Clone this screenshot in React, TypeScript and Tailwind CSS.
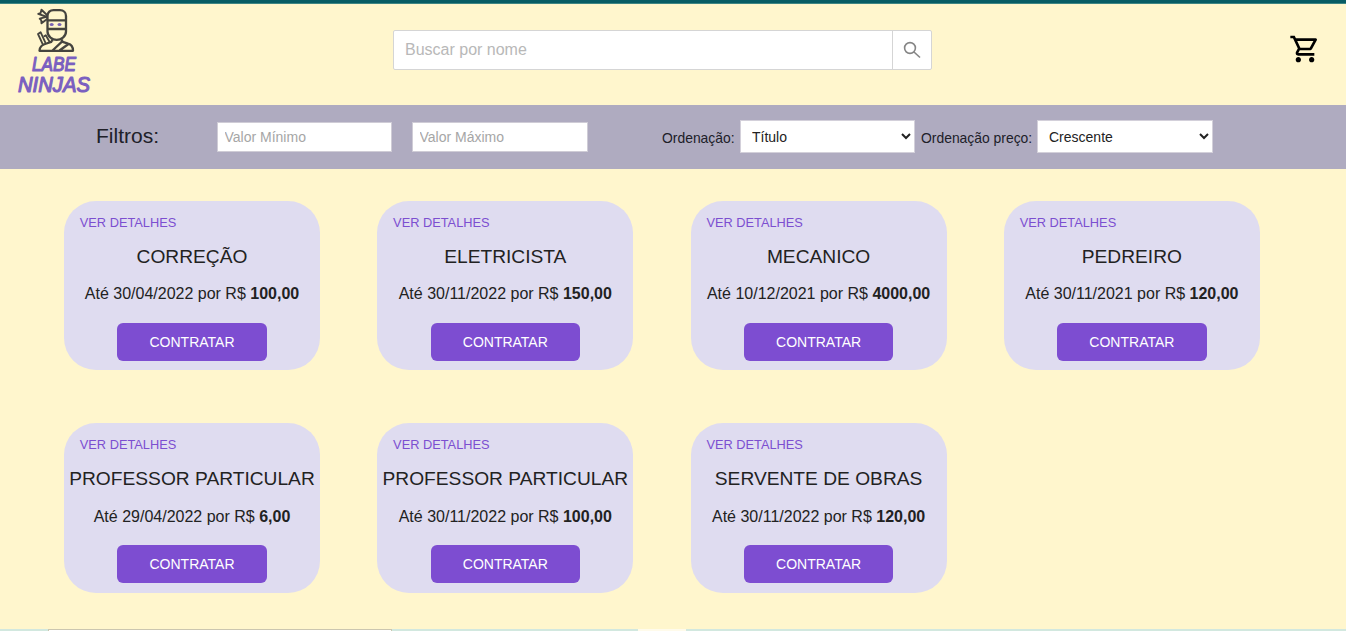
import React from "react";

type Job = { title: string; date: string; price: string };

const jobs: Job[] = [
  { title: "CORREÇÃO", date: "30/04/2022", price: "100,00" },
  { title: "ELETRICISTA", date: "30/11/2022", price: "150,00" },
  { title: "MECANICO", date: "10/12/2021", price: "4000,00" },
  { title: "PEDREIRO", date: "30/11/2021", price: "120,00" },
  { title: "PROFESSOR PARTICULAR", date: "29/04/2022", price: "6,00" },
  { title: "PROFESSOR PARTICULAR", date: "30/11/2022", price: "100,00" },
  { title: "SERVENTE DE OBRAS", date: "30/11/2022", price: "120,00" },
];

function Logo() {
  return (
    <svg width="80" height="92" viewBox="14 6 80 92" role="img" aria-label="Labe Ninjas">
      <g fill="none" stroke="#45443f" strokeWidth="2.300" strokeLinejoin="round">
        <path d="M47.500 20v-4c0-3.800 2.700-5.800 6-5.800h6.500c3.500 0 6 2.200 6 5.800v15.500c0 5-5 8.300-9.300 8.300s-9.200-3.300-9.200-8.300z" />
        <path d="M47 20.300h19M47 29h19" />
        <path d="M47.500 15.500l-6-5.800-1 3.500-2.300.6 9 3.200" strokeWidth="1.900" />
        <path d="M47.500 16.500l-7.800 2.200 1.600 1.700.2 2.800 6-4.500" strokeWidth="1.900" />
        <path d="M52 39.200v2.500M62 39.200v2.500" />
        <path d="M52 41.700l-5.500 1.800c-4.500 1.200-7 3-7 7.300h33.500c0-4.300-1.500-6.500-5-7.200l-6-1.900L52.500 50.500M59.500 50.500l9-6.500" />
        <path d="M43 44.800l-5-10.800 2.600-1.800 5 11M43.800 36.500l2-1.200 4 7" strokeWidth="1.800" />
      </g>
      <ellipse cx="51.700" cy="24.600" rx="2" ry="1.500" fill="#7962b5" />
      <ellipse cx="59.500" cy="24.600" rx="2" ry="1.500" fill="#7962b5" />
      <g
        fill="#7a5fc0"
        stroke="#7a5fc0"
        strokeWidth="1.200"
        strokeLinejoin="round"
        fontFamily="'Liberation Sans Narrow', 'Liberation Sans', Arial, sans-serif"
        fontStyle="italic"
      >
        <text x="32" y="71" fontSize="20" textLength="44" lengthAdjust="spacingAndGlyphs">LABE</text>
        <text x="18" y="92" fontSize="21.500" textLength="72" lengthAdjust="spacingAndGlyphs">NINJAS</text>
      </g>
    </svg>
  );
}

function Header() {
  return (
    <header className="flex h-[101px] justify-between pl-[14px] pr-[25px] pt-0.5">
      <div className="w-[101px]">
        <Logo />
      </div>
      <div className="mt-6 flex h-10 w-[539px] rounded-[2px] border border-[#d5d5d5] bg-white">
        <input
          className="min-w-0 flex-1 px-[11.500px] text-base outline-none placeholder:text-[#b8b8b8]"
          placeholder="Buscar por nome"
        />
        <button aria-label="Buscar" className="flex w-[39px] items-center justify-center border-l border-[#d5d5d5]">
          <svg width="18" height="18" viewBox="0 0 18 18" fill="none" stroke="#858585" strokeWidth="1.600">
            <circle cx="7" cy="7" r="5.400" />
            <path d="M11 11l6 5.500" />
          </svg>
        </button>
      </div>
      <div className="flex w-[112px] justify-end pt-[27px]">
        <svg width="32" height="32" viewBox="0 0 24 24" fill="#000" aria-label="Carrinho">
          <path d="M15.550 13c.75 0 1.410-.41 1.750-1.030l3.580-6.490c.37-.66-.11-1.480-.87-1.480H5.210l-.94-2H1v2h2l3.600 7.590-1.350 2.440C4.520 15.370 5.480 17 7 17h12v-2H7l1.100-2h7.450zM6.160 6h12.150l-2.760 5H8.530L6.160 6zM7 18c-1.100 0-1.990.9-1.990 2S5.900 22 7 22s2-.9 2-2-.9-2-2-2zm10 0c-1.100 0-1.990.9-1.990 2s.89 2 1.990 2 2-.9 2-2-.9-2-2-2z" />
        </svg>
      </div>
    </header>
  );
}

function Filters() {
  const field = "h-[30px] border border-[#cfccd6] bg-white px-[6.500px] text-sm outline-none placeholder:text-[#a6a6a6]";
  const select = "mb-px h-[33px] border border-[#d3d0da] bg-white pl-[7px] text-sm text-[#222]";
  return (
    <section className="flex h-16 items-center bg-[#afabc0] text-sm text-[#202028]">
      <h2 className="mb-0.5 ml-24 w-[121px] text-[21px]">Filtros:</h2>
      <input className={`${field} w-[175px]`} placeholder="Valor Mínimo" />
      <input className={`${field} ml-5 w-[176px]`} placeholder="Valor Máximo" />
      <label className="ml-[74px] w-[78px] text-[13.900px] leading-5 pt-px">Ordenação:</label>
      <select className={`${select} w-[175px]`}>
        <option>Título</option>
      </select>
      <label className="ml-1.5 w-[116px] text-[13.900px] leading-5 pt-px">Ordenação preço:</label>
      <select className={`${select} w-[176px]`}>
        <option>Crescente</option>
      </select>
    </section>
  );
}

function Card({ title, date, price }: Job) {
  return (
    <article className="flex h-[169.400px] w-64 flex-col items-center rounded-[32px] bg-[#dfdcf0] pt-3">
      <a className="ml-[15.800px] self-start text-[12.800px] leading-5 text-[#7c4fd0]">VER DETALHES</a>
      <h3 className="mt-[9.500px] whitespace-nowrap text-[19.200px] leading-7 text-[#222]">{title}</h3>
      <p className="mt-[11.700px] text-base leading-6 text-[#222]">
        Até {date} por R$ <b>{price}</b>
      </p>
      <button className="mt-[16.600px] h-[38px] w-[149.300px] rounded-md bg-[#7d4dd1] text-sm text-white">
        CONTRATAR
      </button>
    </article>
  );
}

export default function App() {
  return (
    <div className="flex h-[631px] flex-col overflow-hidden bg-[#fff6cd] font-['Liberation_Sans',Arial,sans-serif]">
      <div className="h-1 shrink-0 border-b border-[#3d8583] bg-[#075c64]" />
      <Header />
      <Filters />
      <main className="grid flex-1 grid-cols-[repeat(4,256px)] content-start gap-x-[57.300px] gap-y-[53px] pl-16 pt-8">
        {jobs.map((job, i) => (
          <Card key={i} {...job} />
        ))}
      </main>
      <div className="flex h-0.5 shrink-0 bg-[#d2e8df]">
        <div className="ml-12 w-[344px] border border-b-0 border-[#cbc6b0] bg-white" />
        <div className="ml-[246px] w-12 bg-[#fffbeb]" />
      </div>
    </div>
  );
}
